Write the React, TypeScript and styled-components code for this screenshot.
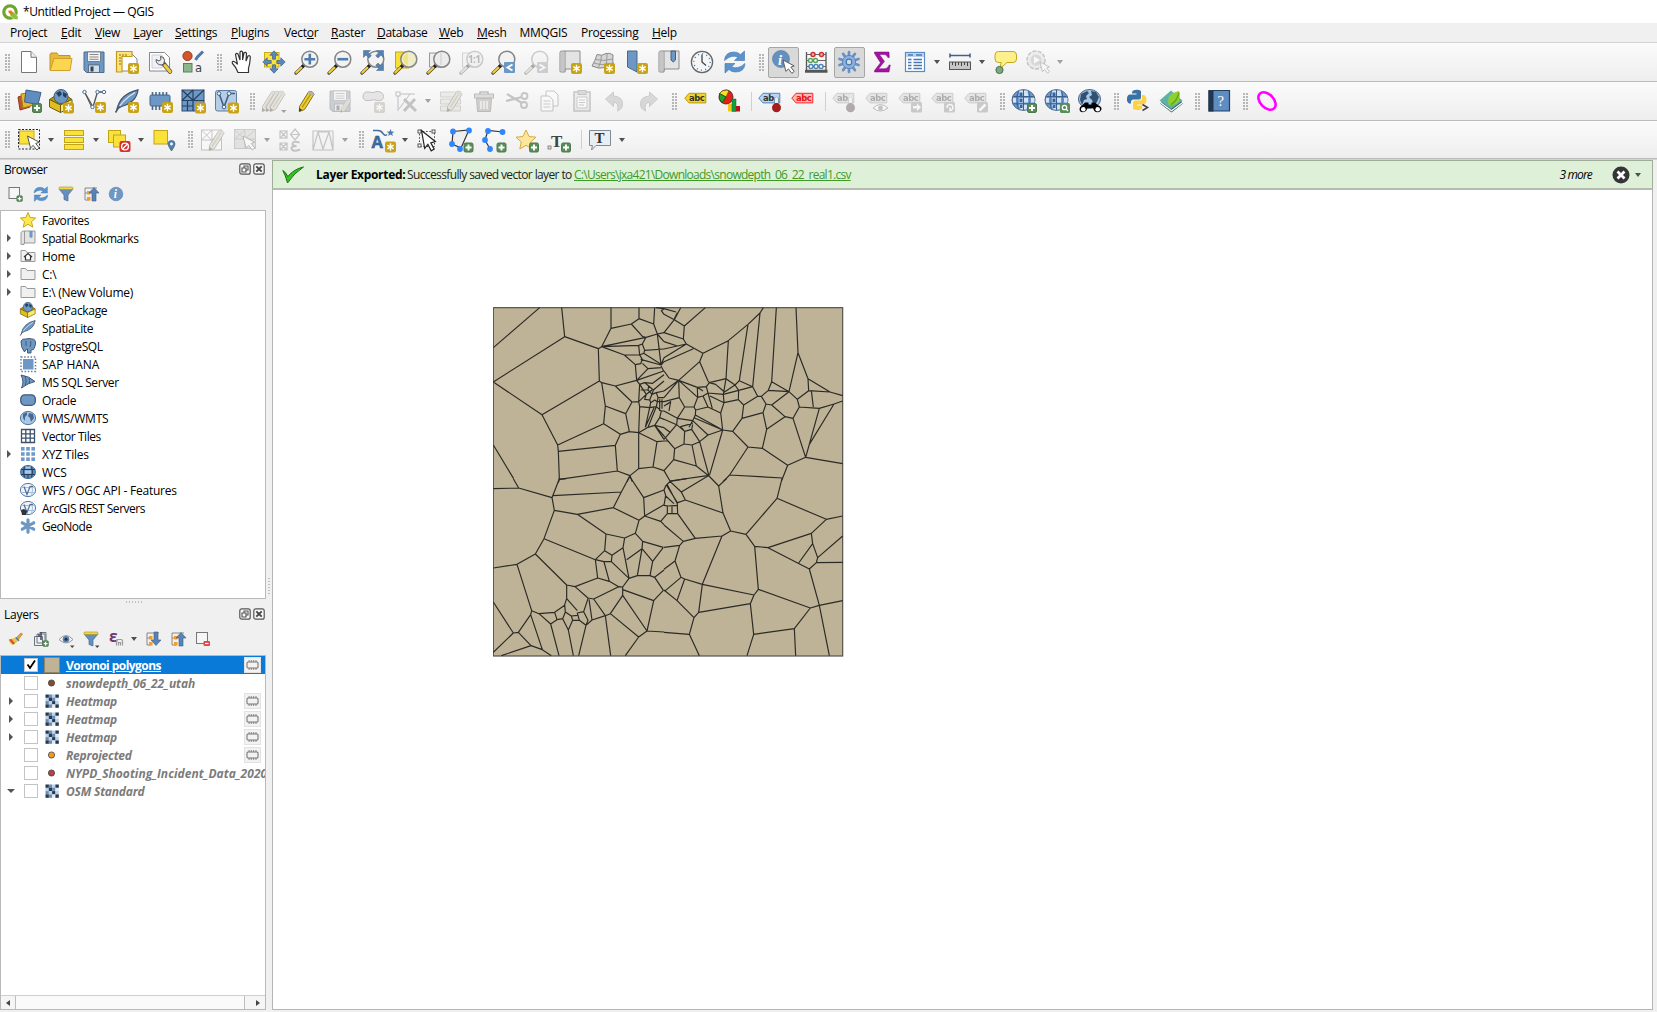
import React from 'react';
import styled, { createGlobalStyle, css } from 'styled-components';

const Global = createGlobalStyle`
  * { box-sizing: border-box; }
  html, body { margin: 0; padding: 0; background: #f0f0f0; }
  body { font-family: "Open Sans", "Noto Sans", sans-serif; font-size: 12px; color: #000; overflow: hidden; }
`;

/* ---------- shell ---------- */
const Window = styled.div`
  width: 1657px; height: 1012px; display: flex; flex-direction: column; background: #f0f0f0; overflow: hidden;
`;
const TitleBar = styled.div`
  height: 23px; flex: none; background: #fff; display: flex; align-items: center; gap: 5px; padding-left: 2px;
  letter-spacing: -0.38px; white-space: pre;
`;
const MenuBar = styled.nav`
  height: 20px; flex: none; display: flex; align-items: center; padding-left: 10px; border-bottom: 1px solid #d4d4d4;
`;
const MenuItem = styled.span<{ $w: number }>`
  width: ${p => p.$w}px; flex: none; white-space: nowrap; letter-spacing: -0.28px; line-height: 18px;
  u { text-underline-offset: 1px; }
`;
const ToolRow = styled.div<{ $h: number }>`
  height: ${p => p.$h}px; flex: none; display: flex; align-items: center; padding-left: 1px;
  background: linear-gradient(#fbfbfb, #eeeeee); border-bottom: 1px solid #bcbcbc;
`;
const Handle = styled.span<{ $w: number }>`
  width: ${p => p.$w}px; height: 17px; flex: none; display: flex; justify-content: flex-end; padding-right: 3px;
  &::after { content: ''; width: 5px; height: 17px; background: radial-gradient(circle at 1px 1px, #b4b4b4 0.7px, transparent 0.9px) 0 0 / 3px 3px; }
`;
const Separator = styled.span`
  width: 8px; flex: none; height: 19px; border-left: 1px solid #cfcfcf; transform: translateX(5px);
`;
const ToolButton = styled.span<{ $on?: boolean; $menu?: boolean; $dim?: boolean }>`
  width: ${p => (p.$menu ? 45 : 32.92)}px; height: 31px; flex: none; display: flex; align-items: center; padding-left: 4px;
  svg { display: block; flex: none; overflow: visible; ${p => p.$dim && css`filter: grayscale(.85); opacity: .38;`} }
  ${p => p.$on && css`background: #d9d9d9; border: 1px solid #a6a6a6; border-radius: 2px; width: 30.92px; margin: 0 1px; padding-left: 2.5px;`}
`;
const Caret = styled.i<{ $dim?: boolean; $ml?: number }>`
  width: 0; height: 0; margin-left: ${p => p.$ml ?? 7}px; border: 3.5px solid transparent; border-top: 4px solid ${p => (p.$dim ? '#a0a0a0' : '#505050')}; border-bottom: 0;
`;

/* ---------- docks ---------- */
const Body = styled.div`
  flex: 1; min-height: 0; display: flex; border-top: 1px solid #d3d3d3;
`;
const Docks = styled.aside`
  width: 266px; flex: none; display: flex; flex-direction: column;
`;
const DockHead = styled.header<{ $h: number; $ls: number }>`
  height: ${p => p.$h}px; flex: none; display: flex; align-items: center; padding: 0 1px 0 4px; letter-spacing: ${p => p.$ls}px;
  span { flex: 1; }
  svg { margin-left: 2px; }
`;
const DockTools = styled.div<{ $h: number }>`
  height: ${p => p.$h}px; flex: none; display: flex; align-items: center; padding-left: 7px; padding-bottom: 1px;
  svg { flex: none; overflow: visible; }
`;
const DockTool = styled.span<{ $w: number }>`
  width: ${p => p.$w}px; flex: none; display: flex; align-items: center;
`;
const List = styled.div<{ $h: number }>`
  height: ${p => p.$h}px; flex: none; background: #fff; border: 1px solid #b9b9b9; overflow: hidden;
  display: flex; flex-direction: column;
`;
const TreeRow = styled.div<{ $ls: number }>`
  height: 18px; flex: none; display: flex; align-items: center; letter-spacing: ${p => p.$ls}px; white-space: nowrap;
  > svg { flex: none; margin-right: 6px; overflow: visible; }
`;
const Expander = styled.span<{ $w: number; $state?: 'open' | 'closed' }>`
  width: ${p => p.$w}px; flex: none; display: flex; padding-left: ${p => (p.$w > 20 && p.$state === 'closed' ? 8 : 6)}px;
  &::before {
    content: ''; display: ${p => (p.$state ? 'block' : 'none')}; border: 4px solid transparent;
    ${p => p.$state === 'open'
      ? css`border-top-color: #555; border-bottom: 0;`
      : css`border-left-color: #555; border-right: 0;`}
  }
`;
const LayerRow = styled.div<{ $sel?: boolean; $ls: number }>`
  height: 18px; flex: none; display: flex; align-items: center; white-space: nowrap;
  font-weight: 700; font-style: ${p => (p.$sel ? 'normal' : 'italic')}; color: ${p => (p.$sel ? '#fff' : '#7b7b7b')};
  background: ${p => (p.$sel ? '#0a7ad9' : 'transparent')}; text-decoration: ${p => (p.$sel ? 'underline' : 'none')};
  letter-spacing: ${p => p.$ls}px;
`;
const Check = styled.span`
  width: 14px; height: 14px; flex: none; background: #fff; border: 1px solid #c4c4c4; display: flex; margin-right: 6px;
`;
const LayerIcon = styled.span`
  width: 22px; flex: none; display: flex;
`;
const LayerName = styled.span`
  flex: 1; min-width: 0; overflow: hidden;
`;
const MemBadge = styled.span`
  width: 17px; height: 16px; flex: none; margin-right: 4px; background: #f2f2f2; border: 1px solid #e2e2e2; display: flex; align-items: center; justify-content: center;
`;
const HSplit = styled.div`
  height: 6px; flex: none; display: flex; justify-content: center; align-items: center; padding: 0 0 1px 3px;
  &::after { content: ''; width: 17px; height: 2px; background: repeating-linear-gradient(90deg, #c0c0c0 0 1px, transparent 1px 3px); }
`;
const VSplit = styled.div`
  width: 6px; flex: none; display: flex; justify-content: center; padding-top: 418px;
  &::after { content: ''; width: 2px; height: 17px; background: repeating-linear-gradient(#c0c0c0 0 1px, transparent 1px 3px); }
`;
const ScrollBar = styled.div`
  height: 14px; flex: none; margin-top: auto; display: flex; background: #f5f5f5; border-top: 1px solid #cfcfcf; align-items: center;
`;
const ScrollEnd = styled.span<{ $dir: 'l' | 'r' }>`
  width: 14px; height: 13px; display: flex; align-items: center; justify-content: center;
  &::before { content: ''; border: 3.5px solid transparent; ${p => p.$dir === 'l' ? 'border-right: 4px solid #444; border-left: 0;' : 'border-left: 4px solid #444; border-right: 0;'} }
`;
const Thumb = styled.span`
  height: 13px; flex: 1; background: #fafafa; border: 1px solid #bdbdbd; border-width: 0 1px; margin-right: 6px;
`;

/* ---------- canvas ---------- */
const Canvas = styled.main`
  width: 1381px; flex: none; height: 850px; background: #fff; border: 1px solid #b5b5b5; border-top: 0; display: flex; flex-direction: column;
`;
const Message = styled.div`
  height: 30px; flex: none; margin: 0 -1px; background: #dff0d8; border: 1px solid #9fae99; border-bottom: 2px solid #b4bcb0; display: flex; align-items: center; padding: 0 11px 0 9px;
  white-space: pre;
  svg { flex: none; }
`;
const MsgTitle = styled.b`
  margin-left: 11px; width: 91px; letter-spacing: -0.31px;
`;
const MsgText = styled.span`
  width: 167px; letter-spacing: -0.62px; color: #222;
`;
const MsgLink = styled.a`
  color: #3e9b26; text-decoration: underline; flex: 1; letter-spacing: -0.73px;
`;
const MsgMore = styled.em`
  margin-right: 20px; letter-spacing: -0.85px;
`;
const MapArea = styled.div`
  padding: 117px 0 0 220px;
  svg { display: block; }
`;

/* ---------- icon parts ---------- */
const B = '#6d97c4', BD = '#415a75';
const Star = ({ x = 13, y = 13 }) => (
  <g transform={`translate(${x} ${y})`}>
    <rect width="11" height="11" rx="2" fill="#c9a316" />
    <path d="M5.5 1.8v7.4M2.3 3.6l6.4 3.8M8.7 3.6L2.3 7.4" stroke="#fff" strokeWidth="1.4" />
    <circle cx="5.5" cy="5.5" r="1.2" fill="#fff" />
  </g>
);
const Plus = ({ x = 14, y = 14, s = 1 }) => (
  <g transform={`translate(${x} ${y}) scale(${s})`}>
    <rect x=".5" y=".5" width="9" height="9" rx="1.5" fill="#5a8c5a" stroke="#4c7a4d" />
    <path d="M5 2v6M2 5h6" stroke="#fff" strokeWidth="1.9" />
  </g>
);
const Lens = ({ fill = '#f2f2f2' }) => (
  <g>
    <path d="M.9 23.1L8.3 16" stroke="#4a4a3a" strokeWidth="3.2" strokeLinecap="round" />
    <path d="M1.3 22.6L6.6 17.6" stroke="#f6cf3a" strokeWidth="2" strokeLinecap="round" />
    <path d="M7 17l2.4-2.3" stroke="#222" strokeWidth="3" />
    <circle cx="14.8" cy="9.2" r="8" fill={fill} stroke="#858585" strokeWidth="1.5" />
  </g>
);
const Cursor = ({ x = 10, y = 9, s = 1 }) => (
  <path transform={`translate(${x} ${y}) scale(${s})`} d="M0 0l3 12 2.7-2.6 3.6 4.6 2.5-2-3.6-4.5 3.6-1.3z" fill="#fff" stroke="#555" strokeWidth="1" />
);
const Mag = ({ x = 12, y = 12 }) => <rect x={x} y={y} width="11" height="11" rx="1" fill={B} />;
const Tag = ({ c = '#f5d327', s = '#b89a10', t = 'abc', tc = '#333' }) => (
  <g>
    <path d="M.8 9.2L5 4.3h16.8v9.6H5z" fill={c} stroke={s} />
    <text x="5" y="12" fontSize="8.4" fontWeight="700" fontFamily="DejaVu Sans, sans-serif" letterSpacing="-.4" fill={tc}>{t}</text>
  </g>
);
const Globe = () => (
  <g>
    <ellipse cx="11.500" cy="11" rx="11.500" ry="10.400" fill="#6a9ad2" stroke="#4a6787" />
    <path d="M7.500 1.500h8l1 6h-10zM1 9h4v4.500H1zM7 9h9v4.500H7zM18 9h4.500v4.500H18zM7 15.500h9l-1.500 5h-6z" fill="#d3e3f4" />
    <path d="M11.500 1v20M6.200 2.500q-3 8.500 0 17.500M16.800 2.500q3 8.500 0 17.500M1.500 7.500h20M1.500 14.800h20" stroke="#3a6090" fill="none" strokeWidth="1" />
    <path d="M7.500 3.500h3v3.500h-3zM7.500 9.500h3V13h-3zM8 16h2.500v3H8z" fill="#35649c" />
  </g>
);
const Earth = () => (
  <g>
    <ellipse cx="11.500" cy="10" rx="11" ry="9.500" fill="#a9c8e8" stroke="#42607f" />
    <path d="M3 5l6-3 2 2-3 3 1 3-3 1-2 5-2-5zM13 2l5 1 3 5-2 5-3 3-2-5-3-3 3-2z" fill="#32506f" />
  </g>
);
const Pencil = ({ x = 0 }) => (
  <g transform={`translate(${x} 0)`}>
    <path d="M4.500 17.500L14 2.300q4-.5 5 3L9.500 20.500l-5.200 2z" fill="#f2d12f" stroke="#7c6a1d" />
    <path d="M7 18.500L16.500 4" stroke="#b89a1e" strokeWidth="1.400" />
    <path d="M4.500 19l-.3 3.400 3-1.400z" fill="#333" />
    <path d="M14 2.300q4-.5 5 3l-1.500 2.300q-1.300-2.600-4.800-3.200z" fill="#b3b3b3" />
  </g>
);
const Feather = () => (
  <g><path d="M2 20Q4 12 9 7.500T23 .8q-1 7-5.500 11T6.500 17.500z" fill={B} stroke="#3f556e" strokeWidth="1.200" /><path d="M.5 23.500Q7 11 20 3.500" fill="none" stroke="#dce8f4" strokeWidth="1.200" /><path d="M.5 23.500l4-6.500" stroke="#3f556e" strokeWidth="1.500" /></g>
);
const Box = () => (
  <g>
    <path d="M.5 10.500l6-4 5 2 6-2 5.500 4L11.500 16z" fill="#b5920f" stroke="#6d5b10" />
    <circle cx="12" cy="7.500" r="7" fill={B} stroke="#42607f" />
    <path d="M7 4l4-2 2 3-3 3zM14 3l4 2-1 4-3-2z" fill="#24405f" />
    <path d="M.5 10.500L11.500 16v7.500L.5 18z" fill="#e0bd1c" stroke="#6d5b10" />
    <path d="M23 10.500L11.500 16v7.500L23 18z" fill="#f9ea6b" stroke="#6d5b10" />
  </g>
);
const Floppy = () => (
  <g>
    <path d="M2 2h20v20.500H4.500L2 20z" fill={B} stroke="#4d6a8b" />
    <rect x="5.500" y="2" width="13" height="9.500" fill="#f3f3f3" stroke="#567" strokeWidth=".7" />
    <path d="M7.500 4.500h9M7.500 7h9M7.500 9.300h9" stroke="#8a8a8a" />
    <rect x="6.500" y="15" width="11" height="7.500" fill="#d5dde5" stroke="#456" strokeWidth=".7" /><rect x="8.500" y="16.500" width="3" height="5" fill="#345" />
  </g>
);
const Refresh = () => (
  <g fill="#5b93cf" stroke="#3f74ae" strokeWidth=".6">
    <path d="M1.500 10.500Q2 2 11 2q4 0 6.500 2.500L21.500 1v9.500h-10L15 7.300Q9 4 1.500 10.500z" />
    <path d="M22 13.500Q21.500 22 12.500 22q-4 0-6.500-2.500L2 23v-9.500h10L8.500 16.700Q14.500 20 22 13.500z" />
  </g>
);
const Temple = () => <g><path d="M18.500 18V10" stroke="#7c8ba0" strokeWidth="4.600" strokeLinecap="round" /><path d="M18.500 14V9.500" stroke="#e6eef6" strokeWidth="3" strokeLinecap="round" /><path d="M18.500 18v-4" stroke="#a51d1d" strokeWidth="2.600" /><circle cx="18.500" cy="18.800" r="4.500" fill="#a51d1d" /></g>;
const Book = () => (
  <g><path d="M2 2.500Q2 1 4 1h18v18H7v3H2.500Q2 22 2 20z" fill="#e3e3e3" stroke="#8b8b8b" /><path d="M7 1v20" stroke="#8b8b8b" /><rect x="2.500" y="2" width="4" height="19" fill="#c6c6c6" /></g>
);
const Node = ({ d }: { d: number[][] }) => <>{d.map(([x, y], i) => <circle key={i} cx={x} cy={y} r="2.900" fill="#2f86ff" />)}</>;

const icons: Record<string, React.ReactNode> = {
  new: <><path d="M4.500 1.500h9.500l5.500 5.800v15.200h-15z" fill="#fff" stroke="#777" /><path d="M14 1.500v5.800h5.500" fill="#eee" stroke="#777" /></>,
  open: <><path d="M1 20V4.500l1-1.500h6l1.500 2.500H21V9" fill="#e9b93a" stroke="#c0941f" /><path d="M1.200 20.500L5 8.500h18L21 20.500z" fill="#fcd64e" stroke="#cfa02a" /></>,
  save: <Floppy />,
  layout: <><path d="M4 4h13l5 5v12H4z" fill="#fff" stroke="#888" /><path d="M1.500 1.500H17v5H7v15.500H1.500z" fill="#fbe27a" stroke="#c49a1c" strokeWidth="1.200" /><path d="M4 5h2M4 8h2M4 11h2M4 14h2M8 4v2M11 4v2" stroke="#8b6c10" /><Star /></>,
  layouts: <><path d="M1.500 2.500h15l5 5V21h-20z" fill="#fff" stroke="#888" /><path d="M4 5h10v13H4z" fill="#eef2f8" stroke="#ccd" /><path d="M15 13l7 8.500" stroke="#555" strokeWidth="4.500" strokeLinecap="round" /><path d="M17 15.500l5 6" stroke="#f2ce3b" strokeWidth="3" strokeLinecap="round" /><path d="M8 9.500l3 1.500 2-1.500-.5-3q4 0 4 4 0 3.500-2.500 4.500-6 0-6-5.500z" fill="#eee" stroke="#555" /></>,
  style: <><circle cx="6.500" cy="6" r="4.600" fill="#d2562b" stroke="#9b3c1b" /><path d="M14.500 10l2-3L22 1.500" stroke="#4e78a6" strokeWidth="3" /><rect x="2.500" y="13.500" width="8.500" height="8.500" fill="#8bb58b" stroke="#5b7f5c" /><text x="14" y="22" fontSize="11.500" fill="#444" fontFamily="DejaVu Sans, sans-serif">a</text></>,
  hand: <path transform="translate(1 0)" d="M8 22.500Q6 17 2.500 13.500q-1-2.500 1.500-2 2 .7 3.500 2.800L5.500 4.500q.8-2 2.500-.5L10 10V2.200q1.300-2 2.600 0V10l1.400-7.200q1.800-1.300 2.500.7L16 11l2-5q1.900-1 2.300.8Q20 14 18.500 18v4.500z" fill="#fff" stroke="#333" strokeWidth="1.200" />,
  panSel: <><rect x="2.500" y="2.500" width="14.500" height="14.500" fill="#fbe23b" stroke="#c6ac1c" /><g fill="#5d88b8" stroke="#3e628a" strokeWidth=".7"><path d="M12 .8l4.200 4.400h-2.700v4h-3v-4H7.800zM12 23.200l4.200-4.400h-2.700v-4h-3v4H7.800zM.8 12l4.400-4.200v2.700h4v3h-4v2.700zM23.200 12l-4.400-4.200v2.700h-4v3h4v2.700z" /></g></>,
  zin: <><Lens /><path d="M14.800 3.800v10.800M9.400 9.200h10.800" stroke="#4f7cae" strokeWidth="2.600" /></>,
  zout: <><Lens /><path d="M9.400 9.200h10.800" stroke="#4f7cae" strokeWidth="2.600" /></>,
  zfull: <><path d="M6 5h14v14H6z" fill="#f0f0f0" /><Lens /><g fill="#5682b2" stroke="#41658d" strokeWidth=".5"><path d="M2.500.5h7L7.300 2.700l3 3-2.300 2.300-3-3L2.500 7.500zM22.500.5h-7l2.200 2.200-3 3L17 8l3-3 2.500 2.500zM22.500 20.500h-7l2.200-2.200-3-3L17 13l3 3 2.500-2.500z" /></g></>,
  zsel: <><rect x="1.500" y="2" width="13" height="16" fill="#f8df34" stroke="#c2a51a" /><Lens fill="#efecca" /><path d="M14 3v12q-4-1-5-6 1-5 5-6z" fill="#f2e57c" /></>,
  zlay: <><rect x="2.500" y="3" width="12" height="14" fill="#eee" stroke="#999" /><Lens fill="#ececec" /><path d="M14 3v12" stroke="#ccc" /></>,
  znat: <><rect x="2.500" y="3" width="12" height="14" fill="#eee" stroke="#999" /><Lens fill="#ececec" /><text x="8" y="13" fontSize="10" fontWeight="700" fill="#555" letterSpacing="-.6">1:1</text></>,
  zlast: <><Lens /><Mag /><path d="M20.500 14.500l-5 3 5 3" stroke="#fff" fill="none" strokeWidth="1.900" /></>,
  znext: <><Lens /><Mag /><path d="M14.500 14.500l5 3-5 3" stroke="#fff" fill="none" strokeWidth="1.900" /></>,
  newMap: <><Book /><Star /></>,
  new3d: <><path d="M1 16Q4 11 6 4.500q5 2 9-1 4-1 7 1.500-1 6 1 12-5-2-9 .5-6 2-13-1.500z" fill="#d6d6d6" stroke="#888" /><path d="M4.500 9.500q8 2 17.500-.5M3 13q8 3 19 0M10.500 5q0 6-3 12.500M16 3.500q0 7-1 13.500" fill="none" stroke="#999" /><Star /></>,
  newBm: <><path d="M3.500 1h9.500v21l-4.700-2.500L3.500 17z" fill={B} stroke="#4a6787" /><Star /></>,
  bms: <><Book /><path d="M14 1h4.500v9l-2.200 2L14 10z" fill={B} stroke="#3f5e80" /></>,
  clock: <><circle cx="12" cy="12" r="10.600" fill="#f4f6f8" stroke="#666" strokeWidth="1.300" /><circle cx="12" cy="12" r="8.200" fill="none" stroke="#4a78aa" strokeWidth="1.400" strokeDasharray="1 3.290" /><path d="M12 4.500V12l4 3.500" stroke="#444" fill="none" strokeWidth="1.300" /></>,
  refresh: <Refresh />,
  ident: <><circle cx="9" cy="9" r="8.500" fill="#6490c0" stroke="#50779f" strokeWidth=".6" /><text x="6" y="14.500" fontSize="14.500" fontStyle="italic" fontWeight="700" fill="#fff" fontFamily="Liberation Serif, serif">i</text><Cursor x={11} y={10} s={0.95} /></>,
  abacus: <><path d="M2.500 2v20M22 2v20M1 22h22.500M1 20.500h22.500" stroke="#555" strokeWidth="1.300" /><path d="M2 4.500h20M2 10.500h20M2 16.500h20" stroke="#666" /><g fill="#fff" strokeWidth="1.500"><circle cx="9" cy="4.500" r="2" stroke="#c33" fill="#f7b0b0" /><circle cx="17.500" cy="4.500" r="2" stroke="#c33" fill="#f7b0b0" /><circle cx="6.500" cy="10.500" r="2" stroke="#5aa35a" /><circle cx="11.500" cy="10.500" r="2" stroke="#5aa35a" /><circle cx="7" cy="16.500" r="2" stroke="#4d86b5" /><circle cx="12" cy="16.500" r="2" stroke="#4d86b5" /><circle cx="17" cy="16.500" r="2" stroke="#4d86b5" /></g></>,
  gear: <><g stroke="#6891c6" strokeWidth="2.700" strokeLinecap="round">{[0, 36, 72, 108, 144].map(a => <path key={a} d="M12 2v20" transform={`rotate(${a} 12 12)`} />)}</g><circle cx="12" cy="12" r="6.600" fill="#8db0dc" stroke="#5a86bd" /><circle cx="12" cy="12" r="2.800" fill="#d3dfec" stroke="#4c78ad" strokeWidth="1.200" /></>,
  sigma: <path d="M4.500 2H19l.3 5.500h-1.500Q17 4.500 14 4.500H9.500l5 7-6 7.300h6Q18 18.800 19 15h1.300L19 22H4.500v-1.500l6-7.700-6-9.300z" fill="#a312a0" stroke="#7c0b7a" strokeWidth=".5" />,
  table: <><rect x="2.500" y="2.500" width="19" height="19" fill="#fff" stroke="#5d8bc0" strokeWidth="1.200" /><rect x="3" y="3" width="18" height="4" fill="#b9d4ef" /><path d="M5 5h5M13 5h6M5 9.500h3.500M10.500 9.500H19M5 12.500h3.500M10.500 12.500H19M5 15.500h3.500M10.500 15.500H19M5 18.500h3.500M10.500 18.500H19" stroke="#4778b3" strokeWidth="1.300" /></>,
  ruler: <><path d="M2 5.500h20M2 3.500v4M22 3.500v4" stroke="#41618a" strokeWidth="1.600" /><rect x="1.500" y="12" width="21" height="7.500" fill="#c6c6c6" stroke="#555" /><path d="M4.500 12v3M7.500 12v4M10.500 12v3M13.500 12v4M16.500 12v3M19.500 12v4" stroke="#444" /></>,
  tip: <><path d="M5.500 1.500h14.500q3.500 0 3.500 3.500v4q0 3.500-3.500 3.500h-6L6.500 19l1.800-6.500H5.500q-3.500 0-3.500-3.500V5q0-3.500 3.500-3.500z" fill="#fdf08a" stroke="#c2a820" /><circle cx="6.500" cy="20" r="3.600" fill="#7aa97a" stroke="#4c6e4c" /></>,
  run: <><circle cx="10" cy="10" r="9" fill="#ddd" stroke="#777" strokeDasharray="4 1.500" strokeWidth="1.500" /><circle cx="10" cy="10" r="5.500" fill="#aaa" /><path d="M8 6.500l6 3.500-6 3.500z" fill="#fff" /><Cursor x={14} y={12} s={0.8} /></>,

  dsm: <><path d="M1 8l9-3 3 13-10 3z" fill="#c4552d" stroke="#8a3a1e" /><path d="M4 5l11-2 2 13-11 3z" fill="#e9b62c" stroke="#a67d14" /><path d="M9 1l15 2.500L21 15.500 7.500 13z" fill="#5f8dbf" stroke="#3e6089" /><Plus x={15} y={14} /></>,
  gpkg: <><Box /><Star x={14} y={13.500} /></>,
  shp: <><path d="M2.500 3L11 18l4.500-15H22" fill="none" stroke="#555" strokeWidth="1.300" /><path d="M2.500 3L9.500 18h2" fill="none" stroke="#555" /><g fill="#fff" stroke="#4a6f96"><circle cx="2.500" cy="3" r="1.700" /><circle cx="15.500" cy="3" r="1.700" /><circle cx="22" cy="3" r="1.700" /><circle cx="10.500" cy="18" r="1.700" /></g><Star /></>,
  spl: <><Feather /><Star /></>,
  mem: <><path d="M4.500 3v18M8 3v18M11.500 3v18M15 3v18M18.500 3v18" stroke="#4c6a8a" strokeWidth="1.600" /><rect x="2" y="6" width="20" height="11" rx="1.500" fill={B} stroke="#40618a" /><Star x={14} /></>,
  mesh: <><rect x="1" y="1" width="22" height="21" fill={B} stroke="#2f4d70" /><path d="M1 1l11 10.500M12 1L1 11.500M23 1L12 11.500M12 1v21M1 11.500h22M6.500 11.500V22M1 17h11" stroke="#26415f" fill="none" strokeWidth="1.200" /><Star x={14} y={13.500} /></>,
  virt: <><rect x="1.500" y="1.500" width="21" height="20.500" rx="2" fill="#b6cde6" stroke="#5a7ea8" /><path d="M5 4.500l5 13.500 5-13.500h6" fill="none" stroke="#3f5f85" strokeWidth="1.600" /><g fill="#fff" stroke="#3f5f85"><circle cx="5" cy="4.500" r="1.800" /><circle cx="15" cy="4.500" r="1.800" /><circle cx="10" cy="18" r="1.800" /></g><Star x={14} y={13.500} /></>,
  edits: <><Pencil x={-4} /><Pencil x={0} /><Pencil x={4} /><path d="M19 21h5.500l-2.700 3z" fill="#222" /></>,
  edit: <Pencil />,
  saveEd: <><Floppy /><g transform="translate(10 8) scale(.68)"><Pencil /></g></>,
  addPoly: <><path d="M2 8q0-6 6-5 4 1.500 8-.5 6 0 6.500 5-.5 5-6 4-4-1.500-8 0-6 1-6.500-3.500z" fill="#ccc" stroke="#666" /><Star /></>,
  vertex: <><path d="M4 5h17M4 5v17M16 5L5 20" fill="none" stroke="#666" /><rect x="2" y="3" width="4" height="4" fill="#fff" stroke="#666" /><path d="M10 10l12 12M21 10L10 22" stroke="#777" strokeWidth="3" /></>,
  modify: <><path d="M1.500 3h20v5h-20zM1.500 10h20v5h-20zM1.500 17h20v5h-20z" fill="#e2dca0" stroke="#998" /><g transform="translate(4 0)"><Pencil /></g></>,
  trash: <><path d="M8 6V3h8v3" fill="none" stroke="#855" strokeWidth="1.600" /><rect x="2.500" y="5" width="19" height="4" fill="#caa" stroke="#855" /><path d="M4.500 9.500h15l-1 13h-13z" fill="#b88" stroke="#855" /><path d="M9 12v8M12 12v8M15 12v8" stroke="#fff" strokeWidth="1.300" /></>,
  cut: <><path d="M2 5l15 9M1 12l16-4" stroke="#777" strokeWidth="2.200" /><circle cx="19.500" cy="7" r="3" fill="none" stroke="#777" strokeWidth="1.800" /><circle cx="19" cy="16" r="3" fill="none" stroke="#777" strokeWidth="1.800" /></>,
  copy: <><path d="M9 2h8l4 4v11H9z" fill="#fff" stroke="#777" /><path d="M4 7h8l4 4v11H4z" fill="#fff" stroke="#777" /><path d="M6.500 12h7M6.500 15h7M6.500 18h7" stroke="#888" /></>,
  paste: <><rect x="4" y="3" width="16" height="19" fill="#ddd" stroke="#777" strokeWidth="1.500" /><rect x="8" y="1.500" width="8" height="4" fill="#aaa" stroke="#777" /><path d="M7 8h10v11H7zM9 11h6M9 13.500h6M9 16h5" fill="#fff" stroke="#888" /></>,
  undo: <path d="M2.500 10l8-7v4q9 .5 9 8 0 5-5 7 2-8-4-9v4.500z" fill="#aaa" stroke="#888" />,
  redo: <path d="M21.500 10l-8-7v4q-9 .5-9 8 0 5 5 7-2-8 4-9v4.500z" fill="#aaa" stroke="#888" />,
  label: <Tag />,
  diagram: <><circle cx="9" cy="8" r="7" fill="#e2231a" stroke="#511" strokeWidth=".8" /><path d="M9 8L2.500 4.500Q6 0 12 1.500z" fill="#f8e21b" stroke="#441" strokeWidth=".6" /><path d="M9 8L2.500 4.500Q1 10 5 14z" fill="#20a82a" stroke="#131" strokeWidth=".6" /><path d="M11 15h4v7.500h-4z" fill="#f6c51c" /><path d="M15 10h4v12.500h-4z" fill="#13a03a" stroke="#064" strokeWidth=".5" /><path d="M19 17h4v5.500h-4z" fill="#b3151a" /></>,
  lblPin: <><Tag c="#b8d5f2" s="#4a86c5" t="ab" /><Temple /></>,
  lblRed: <Tag c="#ffb5b5" s="#f22" tc="#e01515" />,
  d1: <><Tag c="#ccc" s="#888" t="ab" /><Temple /></>,
  d2: <><Tag c="#ccc" s="#888" /><path d="M8 19q7-7 15 0-8 6-15 0z" fill="#fff" stroke="#666" /><circle cx="15.500" cy="19" r="2.400" fill="#777" /></>,
  d3: <><Tag c="#ccc" s="#888" /><rect x="13" y="13" width="11" height="10.500" rx="1.500" fill="#888" /><path d="M15 17h4v-2.500l4 3.700-4 3.700V19.500h-4z" fill="#fff" /></>,
  d4: <><Tag c="#ccc" s="#888" /><rect x="13" y="13" width="11" height="10.500" rx="1.500" fill="#888" /><path d="M16 19a3 3 0 1 1 3 2.500v-3" fill="none" stroke="#fff" strokeWidth="1.500" /></>,
  d5: <><Tag c="#ccc" s="#888" /><rect x="13" y="13" width="11" height="10.500" rx="1.500" fill="#888" /><path d="M15.500 21.500l6-6" stroke="#fff" strokeWidth="2.500" /></>,
  gAdd: <><Globe /><Plus x={15} y={14} /></>,
  gFind: <><Globe /><rect x="15" y="14" width="10" height="10" rx="1.500" fill="#5a8c5a" /><circle cx="19.500" cy="18.500" r="2.200" fill="none" stroke="#fff" strokeWidth="1.300" /><path d="M21 20l2 2" stroke="#fff" strokeWidth="1.300" /></>,
  bino: <><Earth /><path d="M7 13.500h3.500v2h3v-2H17l3.500 3q3 1 3 3.500-.5 3-4 3.200-3.500 0-4.500-4.200h-5.500Q8.500 23 5 23.200q-3.500 0-3.500-3.200 0-2.500 2.500-3.500z" fill="#000" /><circle cx="5.300" cy="20.300" r="2.300" fill="#fff" /><circle cx="19.700" cy="20.300" r="2.300" fill="#fff" /></>,
  python: <><path d="M7 1.500Q12 0 15 2v6.500q0 2-2 2H7.500Q5 10.500 5 13v1.500H3Q.5 13 1 9q.5-3.500 3-3.500h6.500V4.500H6q0-2.500 1-3z" fill="#3873a6" /><path d="M16 6h2q2.500 1 2.500 5.500-.5 3.500-3 4H11v1h5v3q-3 3-9 .5v-6.500q0-2 2-2H14q2 0 2-2z" fill="#fcd244" /><path d="M16.500 15.500l5 3-5 3" fill="none" stroke="#444" strokeWidth="1.600" /></>,
  leaf: <><path d="M1 14.500l11.500 9 11.500-9-2-3H3z" fill="#3c6269" /><path d="M1 12.500l11.500 8.500L24 12.500v1.500l-11.500 8.500L1 14z" fill="#fff" /><path d="M.5 11.500L12 1.500l11.500 10L12 20z" fill="#5fb2a7" /><path d="M9.500 15.500Q8 8 13 4.500q4-2 7-2.500Q22 10 18.500 14 14 17 9.500 15.500z" fill="#8fd12c" /><path d="M12 15.500q6-3 8-12" fill="none" stroke="#69a81d" strokeWidth="1.500" /></>,
  help: <><path d="M2 1.500h20.500V22H2z" fill="#5d8dc3" stroke="#23405f" strokeWidth="1.200" /><rect x="1.500" y="1.500" width="5" height="21" fill="#22364d" /><text x="10.500" y="16.500" fontSize="14.500" fill="#fff" fontFamily="Liberation Serif, serif">?</text></>,
  ring: <ellipse cx="12" cy="12" rx="10.300" ry="6.700" transform="rotate(46 12 12)" fill="none" stroke="#ff00ff" strokeWidth="2.600" />,

  select: <><rect x="1.500" y="1.500" width="21" height="19.500" fill="none" stroke="#222" strokeDasharray="2 1.500" /><rect x="2.500" y="3" width="14.500" height="13" fill="#fbe23b" stroke="#c9ac1b" /><Cursor x={10.500} y={8} s={1} /></>,
  selVal: <g fill="#fbe23b" stroke="#c0a419"><rect x="2.500" y="2.500" width="19" height="5" /><rect x="2.500" y="9.500" width="19" height="5" /><rect x="2.500" y="16.500" width="19" height="5" /></g>,
  desel: <><g fill="#fbe23b" stroke="#c0a419"><rect x="1.500" y="2.500" width="12" height="12" /><rect x="6.500" y="7" width="12" height="12" /></g><rect x="12.500" y="13" width="11" height="11" rx="2" fill="#d83030" /><circle cx="18" cy="18.500" r="3.400" fill="none" stroke="#fff" strokeWidth="1.400" /><path d="M15.600 20.900l4.800-4.800" stroke="#fff" strokeWidth="1.400" /></>,
  selLoc: <><rect x="2" y="2.500" width="13.500" height="13.500" fill="#fbe23b" stroke="#c0a419" /><path d="M19.500 23q-3.500-5-3.500-7a3.500 3.500 0 0 1 7 0q0 2-3.500 7z" fill="#5482ad" stroke="#38607f" strokeWidth=".7" /><circle cx="19.500" cy="16" r="1.400" fill="#fff" /></>,
  m1: <><rect x="1.500" y="2" width="20" height="20" fill="#fff" stroke="#777" /><path d="M1.500 12h20M12 2v20M1.500 2l10 10M12 2L1.500 12M21.500 2L12 12" stroke="#777" fill="none" /><g transform="translate(5 0)"><Pencil /></g></>,
  m2: <><rect x="1.500" y="1.500" width="21" height="19" fill="#c9c8aa" stroke="#888" /><path d="M1.500 11h21M12 2v19M1.500 2l10 9M12 2L1.500 11M22 2L12 11" stroke="#888" fill="none" /><Cursor x={10} y={8} s={1} /></>,
  m3: <><g fill="none" stroke="#777" strokeWidth="1.200"><rect x="2" y="3" width="7" height="7" /><path d="M2 3l7 7M9 3l-7 7M2 15h7v7H2zM2 15l7 7M9 15l-7 7M17 1l4.500 5.500L17 12l-4.500-5.500zM12.500 6.500h9" /><path d="M21.500 14.500q-7-2-7 1.500 0 2 4 2-5 .3-5 2.500 1 4 8.500 1" strokeWidth="2" /></g></>,
  m4: <><path d="M2 3h20v19H2zM2 22L7 4l5 17 6-17 4 18M7 4h11" fill="#f2f2f2" stroke="#777" strokeWidth="1.200" /></>,
  anno: <><path d="M2 2.500h5q3 0 5 3t4 1" fill="none" stroke="#456f9c" strokeWidth="1.400" /><path d="M19.500 1l1 2.500 2.700.2-2 1.700.7 2.600-2.400-1.400-2.300 1.400.6-2.600-2-1.700 2.700-.2z" fill="#4d7bb0" /><text x="0.500" y="20" fontSize="16.500" fontWeight="700" fill="#3d6da5" stroke="#264a75" strokeWidth=".4" fontFamily="Open Sans, sans-serif">A</text><Star x={14} y={13.500} /></>,
  annoSel: <><rect x="3.500" y="3.500" width="15" height="15" fill="none" stroke="#444" strokeDasharray="1.500 1.800" /><g fill="#fff" stroke="#555"><rect x="2" y="2" width="3" height="3" /><rect x="16" y="2" width="3" height="3" /><rect x="2" y="16" width="3" height="3" /></g><path d="M5.500 2.500l3.200 17.800 3.200-4 3.300 6.500 3-1.700-3.400-6.300 4.500-1.200z" fill="#fff" stroke="#222" strokeWidth="1.200" /></>,
  annoPoly: <><path d="M4 3.500l16-1.500-8 18-9-4z" fill="#eee" stroke="#333" strokeWidth="1.200" /><Node d={[[4, 3.500], [20, 2.500], [3, 16], [11, 21]]} /><Plus x={14.500} y={14.500} /></>,
  annoLine: <><path d="M21 4L6 2.500 3 12l5 9" fill="none" stroke="#333" strokeWidth="1.200" /><Node d={[[6, 3], [20.500, 4], [3, 12], [8, 21]]} /><Plus x={14.500} y={14.500} /></>,
  annoPt: <><path d="M11 2l3 6.500 7 .7-5.300 4.700 1.600 7L11 17.300 4.800 21l1.500-7L1 9.200l7-.7z" fill="#fde79a" stroke="#d8aa3c" /><Plus x={14} y={14.500} /></>,
  annoTxt: <><text x="4" y="18.500" fontSize="17" fontWeight="700" fill="#444" fontFamily="Liberation Serif, serif">T</text><rect x="1" y="18" width="3" height="3" fill="#ddd" stroke="#777" strokeWidth=".8" /><Plus x={14} y={14.500} /></>,
  annoBox: <><path d="M1.500 2.500h21v15H8L3.500 22l1-4.500h-3z" fill="#e7eef4" stroke="#7f8b96" /><text x="6.500" y="14.500" fontSize="15" fill="#333" fontWeight="700" fontFamily="Liberation Serif, serif">T</text></>,
};

type Tool = string | [string, string];
/* Flags: m = menu caret, d = disabled, o = toggled on. "|" is a handle, "-" a separator. */
const rows: Tool[][] = [
  ['new', 'open', 'save', 'layout', 'layouts', 'style', '|', 'hand', 'panSel', 'zin', 'zout', 'zfull', 'zsel', 'zlay', ['znat', 'd'], 'zlast', ['znext', 'd'], 'newMap', 'new3d', 'newBm', 'bms', 'clock', 'refresh', '|', ['ident', 'o'], 'abacus', ['gear', 'o'], 'sigma', ['table', 'm'], ['ruler', 'm'], 'tip', ['run', 'dm']],
  ['dsm', 'gpkg', 'shp', 'spl', 'mem', 'mesh', 'virt', '|', ['edits', 'd'], 'edit', ['saveEd', 'd'], ['addPoly', 'd'], ['vertex', 'dm'], ['modify', 'd'], ['trash', 'd'], ['cut', 'd'], ['copy', 'd'], ['paste', 'd'], ['undo', 'd'], ['redo', 'd'], '|', 'label', 'diagram', '-', 'lblPin', 'lblRed', '-', ['d1', 'd'], ['d2', 'd'], ['d3', 'd'], ['d4', 'd'], ['d5', 'd'], '|', 'gAdd', 'gFind', 'bino', '|', 'python', 'leaf', '|', 'help', '|', 'ring'],
  [['select', 'm'], ['selVal', 'm'], ['desel', 'm'], 'selLoc', '|', ['m1', 'd'], ['m2', 'dm'], ['m3', 'd'], ['m4', 'dm'], '|', ['anno', 'm'], 'annoSel', 'annoPoly', 'annoLine', 'annoPt', 'annoTxt', '-', ['annoBox', 'm']],
];

const Toolbar = ({ tools, h }: { tools: Tool[]; h: number }) => (
  <ToolRow $h={h}>
    <Handle $w={11.5} />
    {tools.map((t, i) => {
      const [name, f] = Array.isArray(t) ? t : [t, ''];
      if (name === '|') return <Handle key={i} $w={15.3} />;
      if (name === '-') return <Separator key={i} />;
      const d = f.includes('d');
      return (
        <ToolButton key={i} $on={f.includes('o')} $menu={f.includes('m')} $dim={d}>
          <svg width="24" height="24" viewBox="0 0 24 24">{icons[name]}</svg>
          {f.includes('m') && <Caret $dim={d} />}
        </ToolButton>
      );
    })}
  </ToolRow>
);

/* Menu label with the mnemonic index and the slot width. */
const menus: [string, number, number][] = [
  ['Project', 3, 51], ['Edit', 0, 34], ['View', 0, 38.5], ['Layer', 0, 41.5], ['Settings', 0, 56], ['Plugins', 0, 53], ['Vector', 4, 47], ['Raster', 0, 46],
  ['Database', 0, 62], ['Web', 0, 38], ['Mesh', 0, 42.500], ['MMQGIS', -1, 61.500], ['Processing', 3, 71], ['Help', 0, 40],
];

const Folder = () => <path d="M1 13.500V2.500h4.500L7 4.500h8v9z" fill="#f0f0f0" stroke="#999" />;
const SmallGlobe = ({ k }: { k: string }) => (
  <g>
    <ellipse cx="8" cy="8" rx="7.600" ry="6.600" fill={k === 'wcs' ? '#5f8bbb' : k === 'wms' ? '#a9c8e8' : '#eef4fb'} stroke="#54779e" />
    {k === 'wms' && <path d="M3 4l4-2 0 3-2 2v4l-2-3zM9 3l4 1 1 4-3 4-1-4-2-2z" fill="#48698e" />}
    {k === 'wcs' && <path d="M1 5.500h14M1 10.500h14M4.500 2.500q-2 5.500 0 11M11.500 2.500q2 5.500 0 11M8 1.500v13" stroke="#233e5c" fill="none" strokeWidth="1" />}
    {k === 'wcs' && <path d="M5 6.300h6v3.400H5zM5.500 2.500h5v2.300h-5z" fill="#a9c8e8" />}
    {(k === 'wfs' || k === 'arc') && <path d="M1 5.500h14M1 10.500h14M11.500 2.500q2 5.500 0 11" stroke="#a6c1de" fill="none" />}
    {(k === 'wfs' || k === 'arc') && <path d="M4 4.500l3 8 3-8h3" stroke="#4f6f93" fill="none" strokeWidth="1.200" />}
    {k === 'arc' && <path d="M1 10l3-1 3 2-1 4-4 0z" fill="#333" />}
  </g>
);
const treeIcons: Record<string, React.ReactNode> = {
  fav: <path d="M8 .5l2.200 5 5.500.5-4.200 3.700 1.300 5.500L8 12.300l-4.800 2.900 1.300-5.500L.3 6l5.500-.5z" fill="#fce94f" stroke="#c8a51a" />,
  bm: <><path d="M1 2.500L3 1h12v12H4v1.500H1z" fill="#e4e4e4" stroke="#9a9a9a" /><path d="M4.500 1v12.500" stroke="#9a9a9a" /><path d="M9.500 1h3v6L11 8 9.500 7z" fill={B} /></>,
  home: <><Folder /><path d="M4 9l4-3.500L12 9M5.500 8.500v3.500h5V8.500" fill="#fff" stroke="#333" strokeWidth="1.200" /></>,
  folder: <Folder />,
  gpkg: <g transform="scale(.66)"><Box /></g>,
  spl: <g transform="scale(.66)"><Feather /></g>,
  pg: <path d="M1 3Q2 .5 6 1q3-1 6 0 4 0 3.500 5-.5 3-2 5.500L11 12v3H7.500v-4L6 11.500 4.500 14Q.5 9 1 3zM6 3v5M10.500 3q1 3-.5 6" fill={B} stroke={BD} />,
  hana: <><rect x="3" y="3" width="10.500" height="10.500" fill={B} /><rect x="1" y="1" width="14.500" height="14.500" fill="none" stroke="#5a7ea6" strokeWidth="1.500" strokeDasharray="1.500 1.700" /></>,
  ms: <path d="M1 1q8 1 14 6.500Q8 9 1.500 14q3-6-.5-13zM5 2q2 5 .5 9M9 3.500q1 3 0 6" fill={B} stroke={BD} />,
  ora: <rect x=".8" y="2.800" width="14.500" height="10.500" rx="4" fill={B} stroke={BD} strokeWidth="1.300" />,
  wms: <SmallGlobe k="wms" />,
  vt: <path d="M1.500 1.500h13v13h-13zM5.800 1.500v13M10.200 1.500v13M1.500 5.800h13M1.500 10.200h13" fill="#fff" stroke="#3d526a" strokeWidth="1.300" />,
  xyz: <>{[1, 6.200, 11.400].map(x => [1, 6.200, 11.400].map(y => <rect key={x + '-' + y} x={x} y={y} width="3.600" height="3.600" fill="#6f9acb" />))}</>,
  wcs: <SmallGlobe k="wcs" />,
  wfs: <SmallGlobe k="wfs" />,
  arc: <SmallGlobe k="arc" />,
  geo: <g stroke={B} strokeWidth="3.200" strokeLinecap="round"><path d="M8 1.800v12.400M2.300 4.800l11.400 6.400M13.700 4.800L2.300 11.200" /></g>,
};
/* Icon, label, letter spacing, expandable. */
const tree: [string, string, number, boolean?][] = [
  ['fav', 'Favorites', -0.42], ['bm', 'Spatial Bookmarks', -0.44, true], ['home', 'Home', -0.25, true], ['folder', 'C:\\', -0.2, true], ['folder', 'E:\\ (New Volume)', -0.26, true],
  ['gpkg', 'GeoPackage', -0.33], ['spl', 'SpatiaLite', -0.38], ['pg', 'PostgreSQL', -0.42], ['hana', 'SAP HANA', -0.02], ['ms', 'MS SQL Server', -0.38], ['ora', 'Oracle', -0.4],
  ['wms', 'WMS/WMTS', -0.18], ['vt', 'Vector Tiles', -0.46], ['xyz', 'XYZ Tiles', -0.22, true], ['wcs', 'WCS', -0.2], ['wfs', 'WFS / OGC API - Features', -0.22], ['arc', 'ArcGIS REST Servers', -0.47], ['geo', 'GeoNode', -0.48],
];

type Layer = { name: string; icon: string; ls: number; mem?: boolean; sel?: boolean; state?: 'open' | 'closed' };
const layers: Layer[] = [
  { name: 'Voronoi polygons', icon: 'fill', ls: -0.55, mem: true, sel: true },
  { name: 'snowdepth_06_22_utah', icon: '#8a4b2a', ls: -0.03 },
  { name: 'Heatmap', icon: 'raster', ls: -0.17, mem: true, state: 'closed' },
  { name: 'Heatmap', icon: 'raster', ls: -0.17, mem: true, state: 'closed' },
  { name: 'Heatmap', icon: 'raster', ls: -0.17, mem: true, state: 'closed' },
  { name: 'Reprojected', icon: '#f39a1e', ls: -0.2, mem: true },
  { name: 'NYPD_Shooting_Incident_Data_2020', icon: '#b8404a', ls: 0.02 },
  { name: 'OSM Standard', icon: 'raster', ls: -0.2, state: 'open' },
];
const rasterCells = ['#24384f', '#6b8db5', '#bcd0e6', '#24384f', '#bcd0e6', '#24384f', '#6b8db5', '#e3ecf5', '#6b8db5', '#bcd0e6', '#24384f', '#bcd0e6', '#24384f', '#6b8db5', '#e3ecf5', '#24384f'];
const LayerGlyph = ({ k }: { k: string }) => (
  <svg width="16" height="16" viewBox="0 0 16 16">
    {k === 'fill' ? <rect x=".5" y=".5" width="15" height="15" fill="#beb297" stroke="#8f8468" />
      : k === 'raster' ? rasterCells.map((c, i) => <rect key={i} x={1.5 + (i % 4) * 3.300} y={1.500 + Math.floor(i / 4) * 3.300} width="3.400" height="3.400" fill={c} />)
      : <circle cx="7.500" cy="8" r="3.100" fill={k} stroke="#444" strokeWidth=".8" />}
  </svg>
);

const DockButtons = () => (
  <>
    <svg width="12" height="12" viewBox="0 0 12 12"><rect x=".8" y=".8" width="10.400" height="10.400" rx="2" fill="#f6f6f6" stroke="#555" strokeWidth="1.200" /><path d="M5 5V3h4v4H7M3 5h4v4H3z" fill="none" stroke="#555" strokeWidth="1.100" /></svg>
    <svg width="12" height="12" viewBox="0 0 12 12"><rect x=".8" y=".8" width="10.400" height="10.400" rx="2" fill="#f6f6f6" stroke="#555" strokeWidth="1.200" /><path d="M3.300 3.300l5.400 5.400M8.700 3.300L3.300 8.700" stroke="#444" strokeWidth="1.900" /></svg>
  </>
);
const Funnel = () => <><path d="M1 3h14l-5 6v6l-4-1.500V9z" fill="#6490c0" stroke="#4a6f98" strokeWidth=".7" /><rect x="1" y="1" width="14" height="2.600" rx="1" fill="#f1d843" stroke="#a89224" strokeWidth=".6" /></>;
const Tri = () => <path d="M12 14.500h4.500L14.200 17z" fill="#444" />;
const TreeArrow = ({ up }: { up: boolean }) => <><path d="M2 2h12M2 2v12h4M2 7h3" stroke="#888" fill="none" /><rect x="4" y="5" width="3.500" height="3.500" fill="#f59b2c" /><rect x="4" y="11" width="3.500" height="3.500" fill="#f59b2c" /><path transform={up ? undefined : 'rotate(180 11 8)'} d="M11 1.500l5 5.500h-3v8H9V7H6z" fill="#5884b5" stroke="#3a5f88" strokeWidth=".6" /></>;
const Small = ({ w, children }: { w: number; children: React.ReactNode }) => (
  <DockTool $w={w}><svg width="16" height="16" viewBox="0 0 16 16">{children}</svg></DockTool>
);

/* Voronoi edges in four tiles; three units equal one map pixel. */
const edges: { at: [number, number]; d: string }[] = [
  { at: [0, 0], d: `M16 135L155 15M221 15L230 102L331 138L334 235L162 336L16 238L230 102M162 336L209 427L347 363L352 310L341 240L334 235M209 427L211 446L382 428L397 395L347 363M211 446L214 530L388 505L382 428M214 530L211 540M16 427L77 528
M369 15V77L341 132L331 138M369 77L430 64L464 102L474 104L341 132L452 128M430 64L453 48V15M453 48L497 64L500 15M497 64L508 94L474 104M508 94L528 90M508 94L528 117M341 132L409 157L442 186L446 233L382 250L341 240M409 157L455 157L467 152L470 143L463 124L474 104M452 128L463 124M452 128L455 157L463 170L458 183L442 186M467 152L519 185M470 143L528 139M508 94L519 187L458 170M519 187L528 177M519 187L528 165M463 182L480 198L519 195M480 198L446 233L527 205L519 190M382 250L432 298L452 297M352 310L413 333L432 298M413 333L424 387L397 395M424 387L452 390L507 417L495 493L452 498V390M388 505L426 519L452 498M426 519L417 537M426 519L433 537M495 493L528 504M507 417L528 415M455 312L452 390L480 374L500 368L528 400
M446 233L455 245L452 297L455 312L485 315L472 374M455 245L470 240L494 242L528 216M470 240L482 250L480 262L458 262M482 250L496 262L492 275L480 262M496 262L528 235M455 245L475 275L452 297M475 275L470 290L485 292L492 275M475 275L492 262M485 292L488 300L485 315M488 300L500 292L508 297L505 312L485 315M492 275L505 270L510 285L508 297M505 270L528 265M510 285L528 285M508 297L528 297M505 312L480 374M498 315L472 374M505 312L520 325L515 345L500 368M520 325L528 325M515 290V325M522 290V318M515 345L528 350M500 368L528 375M500 368L528 410M504 15L528 18M528 35L520 24L528 18M519 185L508 94` },
  { at: [528, 0], d: `M124 15L61 70L31 51L50 15M61 70L58 109L0 90L31 51M58 109L67 124L117 152L193 114L252 65L288 31L298 15M117 152L107 177L44 233M107 177L132 235L136 240M193 114L186 228L213 247L226 234L252 65M288 31L266 252L226 234M337 15L323 237L313 263L375 267L323 237M396 15L402 150L375 267M402 150L432 228L434 264L498 268L432 228M498 268L536 279M434 264L400 290L375 267M442 264L448 313M400 290L406 313L466 317L510 304L536 295M406 313L387 347L363 342L323 307L306 304L292 281H281L266 252M313 263L292 281M375 267L323 307M306 304L297 330L308 380L363 342M297 330L234 347L239 307L281 281M239 307L223 291L180 300L178 275L186 228M223 291L224 263L266 252M224 263L213 247M213 247L178 270M224 263L178 275M234 347L206 386L252 433L295 437L308 380M252 433L197 517L177 537M197 517L356 526L371 488L295 437M356 526L353 534M371 488L425 464L387 347M425 464L536 483M425 464L466 317M425 464L436 425L510 304
M136 240L186 228M136 240L127 252L132 271L178 275M127 252L100 254L101 284L117 280L132 271M136 240L155 245L178 265M117 280L132 313M132 271L145 318M138 280L180 300M44 233L100 254L117 265M44 233L46 285L0 297M44 233L101 284L90 313M44 233L15 226L0 205M44 233L0 285M44 233L0 265M46 285L62 313H90L95 322L132 313L170 331L180 300M62 313L40 347L0 325M95 322L94 337L176 382L170 331M94 337L86 354L132 397L176 382L90 345M40 347L86 354L75 374M40 347L38 366L0 410M38 366L62 386L83 380L86 366M62 386L60 424L84 427L107 417L132 397M83 380L107 417M84 427L97 490L135 520L107 417M132 397L176 382L137 516M176 382L206 386M60 424L32 438L12 415L0 400M0 415H12M32 438L29 471L97 490M29 471L0 504L18 535L135 518M0 18L36 28M0 35L31 51M40 30L31 48M0 117L40 130L67 124M40 130L0 139M67 124L0 165M88 138L0 177M0 310L20 297L15 325M20 297L10 305M0 350L38 366M0 375L20 390M62 386L50 372L86 362` },
  { at: [0, 528], d: `M16 30L92 28L192 57L199 95L168 180L142 226L87 257L16 268M76 0L92 28M214 0L192 57M195 51L400 40L426 -9M211 2L235 0M400 40L376 87L268 107L199 95M376 87L453 125L470 112L467 57L426 -5M467 57L528 34M470 112L528 78M470 112L518 128L528 138M268 107L354 166L410 178L442 164L453 125M354 166L350 216L322 243L168 180M350 216L372 230L405 207L410 178M372 230L370 249H348L322 243L329 298L364 308L348 250M370 249L423 299L405 207M442 164L464 188L462 210L416 243M464 188L526 206M462 210L448 291M462 210L494 248L526 206M494 248L486 291M423 299L448 291H486L500 296L528 274M500 296L526 335L497 366L404 333M329 298L261 324L236 319L142 226M364 308L392 324L404 325L423 299M392 324L317 361L300 358L261 324M236 319V360L230 378L232 400M236 360L268 396M404 325V350L477 457L497 366M404 350L367 405L452 475L477 457L528 460M452 475L412 531M317 361L352 411L367 405M352 411L312 424L303 362M352 411L368 531M87 257L131 396L153 405L200 401L230 380M16 370L76 463L91 461L128 408L131 396M76 463L16 521M91 461L129 501L40 531M129 501L163 513L190 531M128 408L163 513M153 405L188 436L213 531M188 436L207 423L200 401M207 423L224 420L232 400L250 412L254 425L241 454L224 420M241 454L256 531M254 425H274L294 440L272 531M294 440L312 424M294 440L300 425L287 399L300 360M287 399L268 403L274 425M250 412L268 410" ` },
  { at: [528, 528], d: `M18 8L68 0M18 8L5 22L0 34L5 50L0 80M18 8L52 40L64 64L41 72M52 40L118 0L135 -10M10 18L40 75M5 52L30 75M0 80L12 82L40 80L41 105L10 104V82M24 82V104M10 105L-10 128M40 80V72L8 20M64 64L177 103L164 22L135 -8M164 22L188 0M177 103L200 157L246 167L339 59L354 0M339 59L487 122L536 112M487 122L442 164L312 207L272 203L246 167M442 164L446 195L461 237L536 172M446 195L404 253M312 207L436 271L457 252L461 237M457 252L536 251M436 271L466 380L536 366M466 380L496 531M466 380L439 388L283 332L272 203M283 332L270 349L115 317L174 172L200 157M174 172L94 179L41 105M94 179L58 188L47 200L0 206M58 188L0 139M47 200L33 247L51 296L62 301L115 317M33 247L0 272M51 296L4 336M0 336H4M62 301L39 366M0 334L39 366L90 417L104 401L115 317M104 401L259 375L270 349M259 375L269 467L391 450L439 388M391 450L395 531M269 467L249 531M90 417L76 467L106 531M76 467L0 461` },
];

const Voronoi = () => (
  <svg width="353" height="352" viewBox="15 13 1059 1056">
    <rect x="16" y="15" width="1048" height="1045" fill="#beb297" stroke="#55524c" strokeWidth="3.600" />
    <g fill="none" stroke="#2a2a26" strokeWidth="3.500" strokeLinejoin="round">
      {edges.map((e, i) => <path key={i} d={e.d.replace('"', '').trim()} transform={`translate(${e.at[0]} ${e.at[1]})`} />)}
    </g>
  </svg>
);

export default function App() {
  return (
    <Window>
      <Global />
      <TitleBar>
        <svg width="16" height="16" viewBox="0 0 16 16"><circle cx="8" cy="8" r="6.200" fill="none" stroke="#6fa52c" strokeWidth="3.200" /><path d="M8 8h3.500l4.500 4.500v3h-3.500L8 11.500z" fill="#8cbf3b" stroke="#fff" strokeWidth=".5" /><path d="M6.500 6.500h3l2 3-2 1.500-3-2.500z" fill="#ee7913" /></svg>
        <span>*Untitled Project — QGIS</span>
      </TitleBar>
      <MenuBar>
        {menus.map(([t, m, w]) => (
          <MenuItem key={t} $w={w}>{m < 0 ? t : <>{t.slice(0, m)}<u>{t[m]}</u>{t.slice(m + 1)}</>}</MenuItem>
        ))}
      </MenuBar>
      <Toolbar tools={rows[0]} h={39} />
      <Toolbar tools={rows[1]} h={39} />
      <Toolbar tools={rows[2]} h={38} />
      <Body>
        <Docks>
          <DockHead $h={18} $ls={-0.5}><span>Browser</span><DockButtons /></DockHead>
          <DockTools $h={32}>
            <Small w={26}><rect x="2" y="1.500" width="10.500" height="11" fill="#f6f6f6" stroke="#777" /><Plus x={9.500} y={9.500} s={0.62} /></Small>
            <Small w={25}><g transform="scale(.67)"><Refresh /></g></Small>
            <Small w={25}><Funnel /></Small>
            <Small w={25}><TreeArrow up /></Small>
            <Small w={25}><circle cx="8" cy="8" r="6.800" fill="#6d97c4" stroke="#557da8" strokeWidth=".6" /><text x="5.800" y="12.200" fontSize="11.500" fontStyle="italic" fontWeight="700" fill="#fff" fontFamily="Liberation Serif, serif">i</text></Small>
          </DockTools>
          <List $h={389}>
            {tree.map(([icon, label, ls, exp]) => (
              <TreeRow key={label} $ls={ls}>
                <Expander $w={19} $state={exp ? 'closed' : undefined} />
                <svg width="16" height="16" viewBox="0 0 16 16">{treeIcons[icon]}</svg>
                {label}
              </TreeRow>
            ))}
          </List>
          <HSplit />
          <DockHead $h={18} $ls={-0.27}><span>Layers</span><DockButtons /></DockHead>
          <DockTools $h={32}>
            <Small w={26}><path d="M9 7l5-5 1.500 1L11 9z" fill="#e3a83a" stroke="#a36f1d" strokeWidth=".6" /><path d="M1.500 8.500L9 6.500l3 3L6 14q-3-1-4.500-5.500z" fill="#e8c64a" /><path d="M2 8.800l4 4.700 2-1-3.500-4.600z" fill="#d94c3a" /><path d="M8 6.800l3.500 3.500 1-1-3-3z" fill="#4d78a8" /></Small>
            <Small w={25}><path d="M1.500 5.500h8v9h-8zM4 3h8v9H4zM6.500 1.500h6.500v9" fill="none" stroke="#6b7480" /><path d="M8 1v8M6 6V3" stroke="#445" strokeWidth="1.500" /><Plus x={9.500} y={9.500} s={0.62} /></Small>
            <Small w={25}><path d="M1 8.500q7-8 14 0-7 7-14 0z" fill="#f2f2f2" stroke="#999" /><circle cx="8" cy="8.200" r="3.300" fill="#5a84b3" /><circle cx="8" cy="8.200" r="1.500" fill="#234" /><Tri /></Small>
            <Small w={25}><Funnel /><Tri /></Small>
            <Small w={23}><text x="1" y="10.500" fontSize="16" fontWeight="700" fill="#6a3b74" fontFamily="Open Sans, sans-serif">ε</text><path d="M8.500 14.500V10q0-1.500 1.500-1.500h3q1.500 0 1.500 1.500v4.500M10.500 14.500v-3h2v3" fill="none" stroke="#9a9a9a" strokeWidth="1.200" /></Small>
            <DockTool $w={14}><Caret $ml={0} /></DockTool>
            <Small w={25}><TreeArrow up={false} /></Small>
            <Small w={25}><TreeArrow up /></Small>
            <Small w={25}><rect x="1.500" y="1.500" width="11" height="11" fill="#f6f6f6" stroke="#777" /><rect x="8.500" y="10" width="6.500" height="5" rx="1" fill="#e04848" /><path d="M10 12.500h3.500" stroke="#fff" strokeWidth="1.200" /></Small>
          </DockTools>
          <List $h={355}>
            {layers.map((l, i) => (
              <LayerRow key={i} $sel={l.sel} $ls={l.ls}>
                <Expander $w={23} $state={l.state} />
                <Check>{l.sel && <svg width="12" height="12" viewBox="0 0 12 12"><path d="M2.500 5.500L5 9l5-7.500" fill="none" stroke="#000" strokeWidth="1.800" /></svg>}</Check>
                <LayerIcon><LayerGlyph k={l.icon} /></LayerIcon>
                <LayerName>{l.name}</LayerName>
                {l.mem && <MemBadge><svg width="13" height="10" viewBox="0 0 13 10"><path d="M3 0v10M5.300 0v10M7.700 0v10M10 0v10" stroke="#888" /><rect x="1" y="2" width="11" height="6" rx="1" fill="#f2f2f2" stroke="#777" strokeWidth="1.100" /></svg></MemBadge>}
              </LayerRow>
            ))}
            <ScrollBar><ScrollEnd $dir="l" /><Thumb /><ScrollEnd $dir="r" /></ScrollBar>
          </List>
        </Docks>
        <VSplit />
        <Canvas>
          <Message>
            <svg width="23" height="20" viewBox="0 0 23 20"><path d="M.8 5.500q3 1.500 5 6Q12 4 21.500 2 12 8 5.500 18 3.500 10 .8 5.500z" fill="#2fc51f" stroke="#1b6e14" strokeWidth="1" /></svg>
            <MsgTitle>Layer Exported:</MsgTitle>
            <MsgText>Successfully saved vector layer to</MsgText>
            <MsgLink>C:\Users\jxa421\Downloads\snowdepth_06_22_real1.csv</MsgLink>
            <MsgMore>3 more</MsgMore>
            <svg width="18" height="18" viewBox="0 0 18 18"><circle cx="9" cy="9" r="8.500" fill="#353535" /><path d="M5.500 5.500l7 7M12.500 5.500l-7 7" stroke="#fff" strokeWidth="2.800" /></svg>
            <Caret $ml={5} />
          </Message>
          <MapArea><Voronoi /></MapArea>
        </Canvas>
      </Body>
    </Window>
  );
}
